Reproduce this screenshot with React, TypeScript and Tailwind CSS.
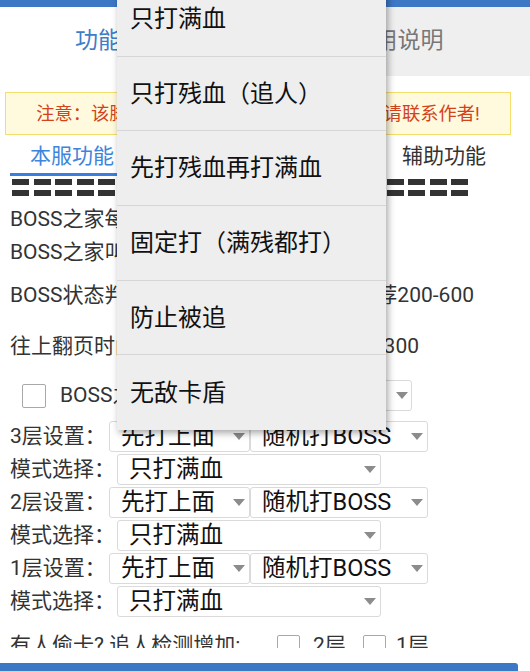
import type { ReactNode } from 'react';

const MENU = ['只打满血', '只打残血（追人）', '先打残血再打满血', '固定打（满残都打）', '防止被追', '无敌卡盾'];
const SUB_TABS = ['本服功能', '跨服功能', '活动功能', '辅助功能'];

function Arrow() {
  return (
    <svg width="12" height="7" viewBox="0 0 12 7" className="shrink-0">
      <polygon points="0,0 12,0 6,7" fill="#8c8c8c" />
    </svg>
  );
}

function Select({ value, width, arrowPad = 'mr-[4px]' }: { value?: string; width: string; arrowPad?: string }) {
  return (
    <div className={`flex h-[31px] ${width} shrink-0 items-center rounded-[3px] border border-[#dadada] bg-white`}>
      <span className="whitespace-nowrap pl-[11px] text-[23.5px] leading-[31px] text-[#111]">{value}</span>
      <span className={`ml-auto ${arrowPad}`}>
        <Arrow />
      </span>
    </div>
  );
}

function Box() {
  return <div className="h-[23px] w-[23px] shrink-0 rounded-[2px] border-[1.5px] border-[#a8a8a8] bg-white" />;
}

function Dashes() {
  return (
    <div className="flex flex-col gap-[5px]">
      {[0, 1].map((r) => (
        <div key={r} className="flex justify-between pl-[12px] pr-[62px]">
          <div className="flex gap-[4.5px]">
            {Array.from({ length: 8 }).map((_, i) => (
              <div key={i} className="h-[6px] w-[17px] bg-[#333]" />
            ))}
          </div>
          <div className="flex gap-[4.5px]">
            {Array.from({ length: 8 }).map((_, i) => (
              <div key={i} className="h-[6px] w-[17px] bg-[#333]" />
            ))}
          </div>
        </div>
      ))}
    </div>
  );
}

function Row({ children }: { children: ReactNode }) {
  return <div className="flex h-[33px] items-center pl-[10px]">{children}</div>;
}

function FloorRows({ n }: { n: number }) {
  return (
    <>
      <Row>
        <span className="w-[99px] shrink-0">{n}层设置：</span>
        <Select value="先打上面" width="w-[141px]" />
        <Select value="随机打BOSS" width="w-[178px]" />
      </Row>
      <Row>
        <span className="w-[107px] shrink-0">模式选择：</span>
        <Select value="只打满血" width="w-[264px]" />
      </Row>
    </>
  );
}

export default function App() {
  return (
    <div
      className="relative flex h-[671px] w-[530px] flex-col overflow-hidden bg-white text-[21px] text-[#333]"
      style={{ fontFamily: 'Roboto, "Noto Sans CJK SC", "Noto Sans", sans-serif' }}
    >
      <div className="h-[648px] overflow-hidden">
        <div className="h-[7px] bg-[#3d78c6]" />
        <div className="flex h-[69px]">
          <div className="flex flex-1 items-center justify-center bg-white text-[23px] text-[#3f7dc9]">功能与设置</div>
          <div className="flex flex-1 items-center justify-center bg-[#efefef] text-[23px] text-[#777]">使用说明</div>
        </div>

        <div className="ml-[5px] mt-[16px] flex h-[43px] w-[506px] items-center justify-center border border-[#f3df6c] bg-[#fff9dd] text-[18.3px] text-[#d2421b]">
          注意：该脚本仅供学习交流使用，如有问题请联系作者!
        </div>

        <div className="flex h-[41px] pl-[10px]">
          {SUB_TABS.map((t, i) => (
            <div key={t} className="flex w-[124px] flex-col">
              <div className={`flex flex-1 items-center justify-center pt-[6px] text-[21px] ${i === 0 ? 'text-[#3d84de]' : 'text-[#333]'}`}>
                {t}
              </div>
              <div className={`h-[4px] ${i === 0 ? 'bg-[#3a7fe0]' : ''}`} />
            </div>
          ))}
        </div>

        <div className="mt-[3px]">
          <Dashes />
        </div>

        <div className="mt-[7px] flex h-[33px] items-center pl-[10px]">BOSS之家每层停留时间（秒）</div>
        <div className="flex h-[33px] items-center pl-[10px]">BOSS之家叫醒后自动开始</div>
        <div className="flex h-[53px] items-center justify-between pl-[10px] pr-[56px]">
          <span>BOSS状态判断延时：</span>
          <span>推荐200-600</span>
        </div>
        <div className="flex h-[49px] items-center justify-between pl-[10px] pr-[111px]">
          <span>往上翻页时间间隔：</span>
          <span>推荐300</span>
        </div>
        <div className="flex h-[49px] items-center pl-[22px]">
          <div className="h-[24px] w-[24px] shrink-0 rounded-[2px] border-[1.5px] border-[#a8a8a8]" />
          <span className="ml-[14px]">BOSS之家开启</span>
          <div className="ml-auto mr-[118px]">
            <Select width="w-[160px]" arrowPad="mr-[3px]" />
          </div>
        </div>

        <FloorRows n={3} />
        <FloorRows n={2} />
        <FloorRows n={1} />

        <div className="flex h-[56px] items-center pl-[10px] text-[21px]">
          <span className="w-[267px] shrink-0">有人偷卡? 追人检测增加:</span>
          <Box />
          <span className="ml-[13px] w-[50px] shrink-0">2层</span>
          <Box />
          <span className="ml-[10px]">1层</span>
        </div>
      </div>

      <div className="mt-[15px] h-[8px] w-[518px] rounded-tr-[3px] bg-[#3c78c6]" />

      <div className="absolute left-[117px] top-[-18px] w-[269px] bg-[#eeeeee] shadow-[2px_3px_7px_rgba(0,0,0,0.35)]">
        {MENU.map((m, i) => (
          <div
            key={m}
            className={`flex h-[74.7px] items-center px-[13px] text-[24px] text-[#111] ${i < MENU.length - 1 ? 'border-b border-[#d6d6d6]' : ''}`}
          >
            {m}
          </div>
        ))}
      </div>
    </div>
  );
}
